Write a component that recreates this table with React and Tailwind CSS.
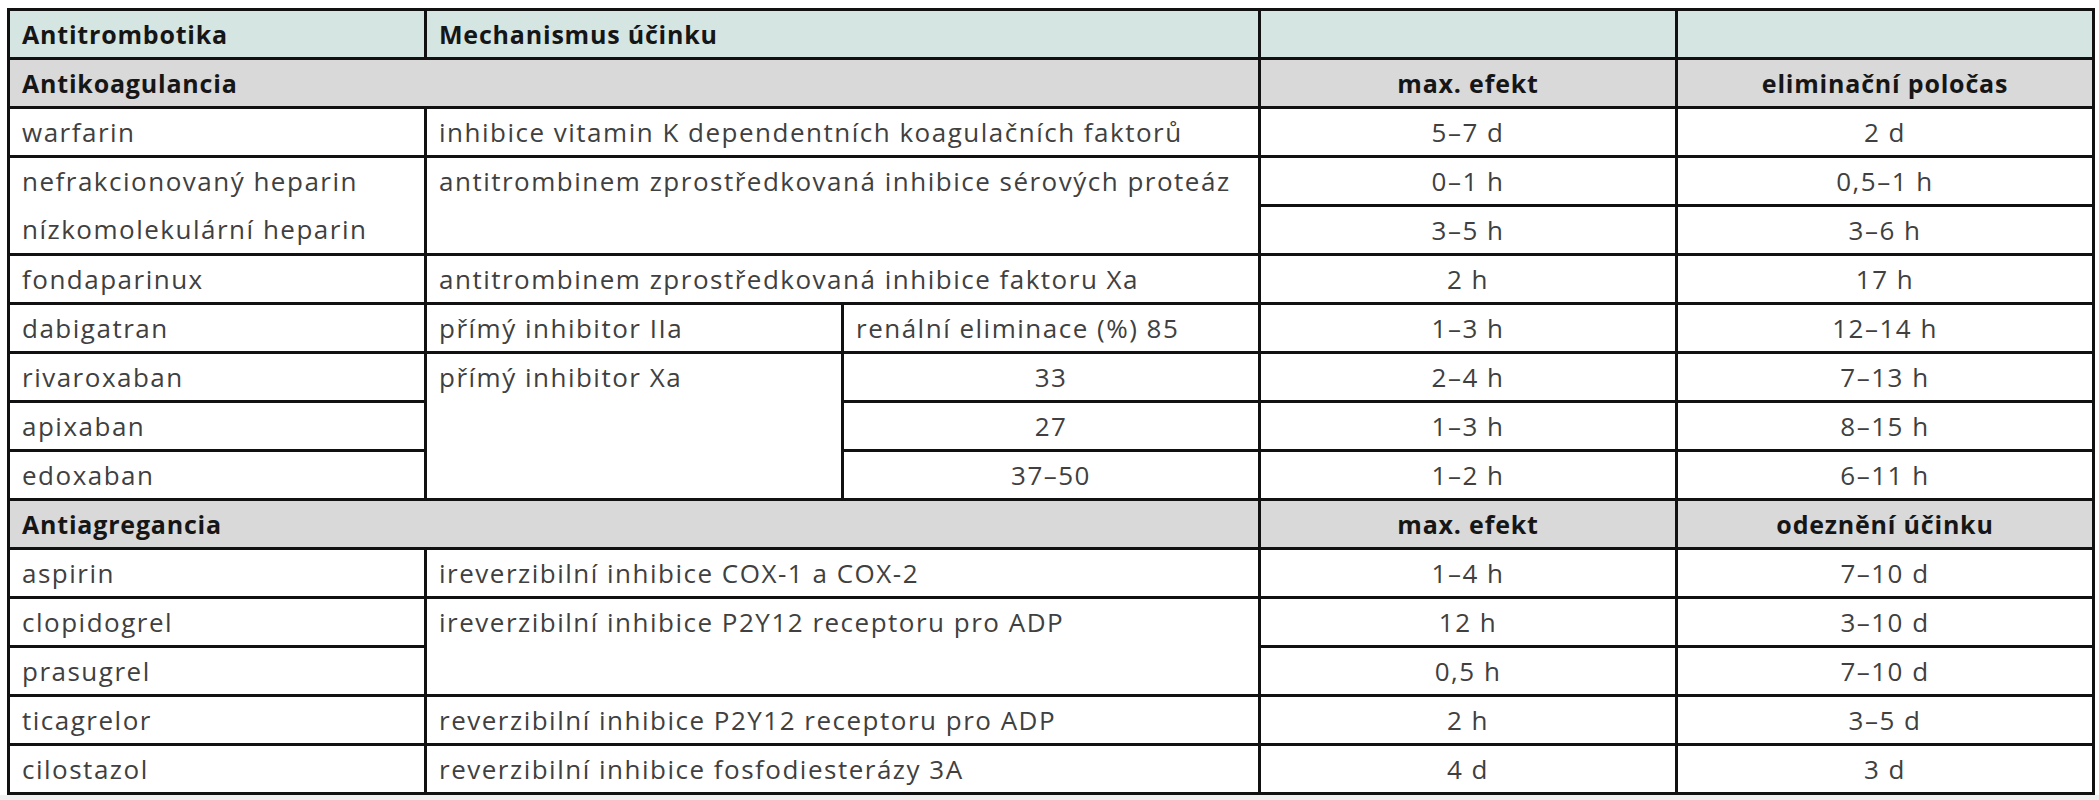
import React from "react";

const B = "border-[3px] border-[#111111] h-[49px] py-0 align-middle";
const L = B + " pl-[12px] pr-2 text-left";
const C = B + " text-center";

function Row({ name, mech, a, b }) {
  return (
    <tr>
      <td className={L}>{name}</td>
      <td className={L} colSpan={2}>{mech}</td>
      <td className={C}>{a}</td>
      <td className={C}>{b}</td>
    </tr>
  );
}

function Section({ title, c3, c4 }) {
  return (
    <tr className="bg-[#d9d9d9] font-bold text-[25px] tracking-[0.8px] text-[#161616]">
      <td className={L} colSpan={3}>{title}</td>
      <td className={C}>{c3}</td>
      <td className={C}>{c4}</td>
    </tr>
  );
}

export default function App() {
  return (
    <div className="w-[2099px] h-[800px] flex flex-col bg-white font-['Open_Sans',sans-serif] text-[26px] tracking-[1.5px] text-[#404040] leading-none">
      <div className="pt-[8px] pl-[7px]">
        <table className="border-collapse table-fixed w-[2085px]">
          <colgroup>
            <col className="w-[417px]" />
            <col className="w-[417px]" />
            <col className="w-[417px]" />
            <col className="w-[417px]" />
            <col className="w-[417px]" />
          </colgroup>
          <tbody>
            <tr className="bg-[#d5e6e2] font-bold text-[25px] tracking-[0.8px] text-[#161616]">
              <td className={L}>Antitrombotika</td>
              <td className={L} colSpan={2}>Mechanismus účinku</td>
              <td className={C}></td>
              <td className={C}></td>
            </tr>
            <Section title="Antikoagulancia" c3="max. efekt" c4="eliminační poločas" />
            <Row name="warfarin" mech="inhibice vitamin K dependentních koagulačních faktorů" a="5–7 d" b="2 d" />
            <tr>
              <td className={B + " pl-[12px] align-top"} rowSpan={2}>
                <div className="h-[46px] flex items-center">nefrakcionovaný heparin</div>
                <div className="h-[49px] flex items-center">nízkomolekulární heparin</div>
              </td>
              <td className={B + " pl-[12px] align-top"} rowSpan={2} colSpan={2}>
                <div className="h-[46px] flex items-center">antitrombinem zprostředkovaná inhibice sérových proteáz</div>
              </td>
              <td className={C}>0–1 h</td>
              <td className={C}>0,5–1 h</td>
            </tr>
            <tr>
              <td className={C}>3–5 h</td>
              <td className={C}>3–6 h</td>
            </tr>
            <Row name="fondaparinux" mech="antitrombinem zprostředkovaná inhibice faktoru Xa" a="2 h" b="17 h" />
            <tr>
              <td className={L}>dabigatran</td>
              <td className={L}>přímý inhibitor IIa</td>
              <td className={L}>renální eliminace (%) 85</td>
              <td className={C}>1–3 h</td>
              <td className={C}>12–14 h</td>
            </tr>
            <tr>
              <td className={L}>rivaroxaban</td>
              <td className={B + " pl-[12px] align-top"} rowSpan={3}>
                <div className="h-[46px] flex items-center">přímý inhibitor Xa</div>
              </td>
              <td className={C}>33</td>
              <td className={C}>2–4 h</td>
              <td className={C}>7–13 h</td>
            </tr>
            <tr>
              <td className={L}>apixaban</td>
              <td className={C}>27</td>
              <td className={C}>1–3 h</td>
              <td className={C}>8–15 h</td>
            </tr>
            <tr>
              <td className={L}>edoxaban</td>
              <td className={C}>37–50</td>
              <td className={C}>1–2 h</td>
              <td className={C}>6–11 h</td>
            </tr>
            <Section title="Antiagregancia" c3="max. efekt" c4="odeznění účinku" />
            <Row name="aspirin" mech="ireverzibilní inhibice COX-1 a COX-2" a="1–4 h" b="7–10 d" />
            <tr>
              <td className={L}>clopidogrel</td>
              <td className={B + " pl-[12px] align-top"} rowSpan={2} colSpan={2}>
                <div className="h-[46px] flex items-center">ireverzibilní inhibice P2Y12 receptoru pro ADP</div>
              </td>
              <td className={C}>12 h</td>
              <td className={C}>3–10 d</td>
            </tr>
            <tr>
              <td className={L}>prasugrel</td>
              <td className={C}>0,5 h</td>
              <td className={C}>7–10 d</td>
            </tr>
            <Row name="ticagrelor" mech="reverzibilní inhibice P2Y12 receptoru pro ADP" a="2 h" b="3–5 d" />
            <Row name="cilostazol" mech="reverzibilní inhibice fosfodiesterázy 3A" a="4 d" b="3 d" />
          </tbody>
        </table>
      </div>
      <div className="flex-1 bg-[#efefef]"></div>
    </div>
  );
}
